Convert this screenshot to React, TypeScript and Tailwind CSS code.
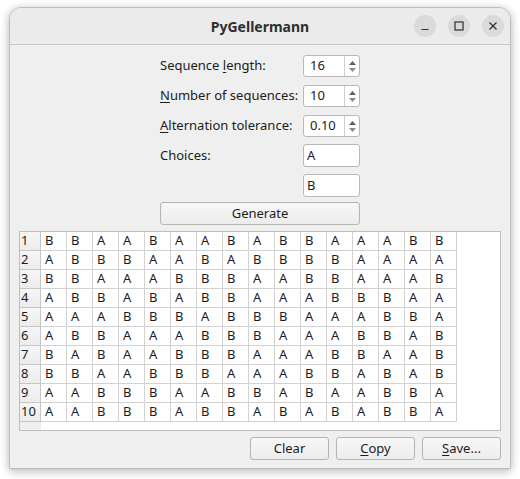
const rows: string[] = [
  "BBAABAABABBAAABB",
  "ABBBAABABBBBAAAA",
  "BBAAABBBAABBAAAB",
  "ABBABABBAAABBBAA",
  "AAABBBABBBAAABBA",
  "ABBAAABBBAAABBAB",
  "BABAABBBAAABBAAB",
  "BBAABBBAAABBABAB",
  "AABBBAABBABAABBA",
  "AABBBABBABABABBA",
];

const font = { fontFamily: '"Noto Sans", "DejaVu Sans", sans-serif' };

function SpinBox({ value }: { value: string }): JSX.Element {
  return (
    <div className="flex h-[22px] w-[57px] rounded-[3px] border border-[#b8b8b8] bg-white">
      <div className="flex flex-1 items-center pl-[6px] text-[13px] text-[#1c1c1c]">{value}</div>
      <div className="flex w-[15px] flex-col items-center justify-center gap-[3px] border-l border-[#d0d0d0]">
        <svg width="7" height="4" viewBox="0 0 7 4">
          <path d="M0 4 L3.5 0 L7 4 Z" fill="#5f5f5f" />
        </svg>
        <svg width="7" height="4" viewBox="0 0 7 4">
          <path d="M0 0 L3.5 4 L7 0 Z" fill="#8a8a8a" />
        </svg>
      </div>
    </div>
  );
}

function LineEdit({ value }: { value: string }): JSX.Element {
  return (
    <div className="flex h-[23px] w-[57px] items-center rounded-[3px] border border-[#b8b8b8] bg-white pl-[3px] text-[13px] text-[#1c1c1c]">
      {value}
    </div>
  );
}

function PushButton({ children, width }: { children: React.ReactNode; width: string }): JSX.Element {
  return (
    <div
      className={`flex h-[23px] items-center justify-center rounded-[3px] border border-[#b4b4b4] bg-gradient-to-b from-[#f7f7f7] to-[#ececec] text-[13px] text-[#1c1c1c] ${width}`}
    >
      {children}
    </div>
  );
}

export default function App(): JSX.Element {
  return (
    <div className="h-[479px] w-[520px] overflow-hidden bg-white pl-[9px] pt-[7px]" style={font}>
      <div className="flex h-[462px] w-[502px] flex-col overflow-hidden rounded-t-[12px] border border-[#bdbdbd] bg-[#efefef] shadow-[0_2px_10px_rgba(0,0,0,0.3)]">
        {/* title bar */}
        <div className="relative flex h-[37px] shrink-0 items-center justify-center border-b border-[#c8c8c8] bg-[#ebebeb]">
          <span className="text-[14px] font-bold text-[#2f2f2f]">PyGellermann</span>
          <div className="absolute right-[6px] top-[7px] flex gap-[12px]">
            <div className="flex h-[22px] w-[22px] items-center justify-center rounded-full bg-[#dadada]">
              <svg width="10" height="10" viewBox="0 0 10 10">
                <path d="M1.5 8.5 H8.5" stroke="#2e2e2e" strokeWidth="1.2" />
              </svg>
            </div>
            <div className="flex h-[22px] w-[22px] items-center justify-center rounded-full bg-[#dadada]">
              <svg width="10" height="10" viewBox="0 0 10 10">
                <rect x="1" y="1" width="8" height="8" fill="none" stroke="#2e2e2e" strokeWidth="1.2" />
              </svg>
            </div>
            <div className="flex h-[22px] w-[22px] items-center justify-center rounded-full bg-[#dadada]">
              <svg width="10" height="10" viewBox="0 0 10 10">
                <path d="M1.5 1.5 L8.5 8.5 M8.5 1.5 L1.5 8.5" stroke="#2e2e2e" strokeWidth="1.2" />
              </svg>
            </div>
          </div>
        </div>

        {/* form */}
        <div className="mx-auto mt-[10px] flex w-[200px] flex-col text-[13px] text-[#1c1c1c]">
          <div className="flex h-[22px] items-center justify-between">
            <span>
              Sequence <span className="underline underline-offset-2">l</span>ength:
            </span>
            <SpinBox value="16" />
          </div>
          <div className="mt-[8px] flex h-[22px] items-center justify-between">
            <span>
              <span className="underline underline-offset-2">N</span>umber of sequences:
            </span>
            <SpinBox value="10" />
          </div>
          <div className="mt-[8px] flex h-[22px] items-center justify-between">
            <span>
              <span className="underline underline-offset-2">A</span>lternation tolerance:
            </span>
            <SpinBox value="0.10" />
          </div>
          <div className="mt-[7px] flex h-[23px] items-center justify-between">
            <span>Choices:</span>
            <LineEdit value="A" />
          </div>
          <div className="mt-[7px] flex h-[23px] items-center justify-end">
            <LineEdit value="B" />
          </div>
          <div className="mt-[5px]">
            <PushButton width="w-[200px]">Generate</PushButton>
          </div>
        </div>

        {/* table */}
        <div className="mx-[9px] mt-[6px] flex h-[200px] flex-col border border-[#bdbdbd] bg-white text-[13px] text-[#1c1c1c]">
          <div className="grid grid-cols-[21px_repeat(16,26px)] auto-rows-[19px]">
            {rows.map((row, i) => (
              <div key={i} className="contents">
                <div className="flex items-center border-b border-r border-[#c6c6c6] bg-gradient-to-b from-[#f6f6f6] to-[#ececec] pl-[1px]">
                  {String(i + 1)}
                </div>
                {row.split("").map((c, j) => (
                  <div key={j} className="flex items-center border-b border-r border-[#d2d2d2] pl-[4px]">
                    {c}
                  </div>
                ))}
              </div>
            ))}
          </div>
          <div className="flex flex-1">
            <div className="w-[21px] bg-[#efefef]" />
          </div>
        </div>

        {/* buttons */}
        <div className="mr-[9px] mt-[6px] flex justify-end gap-[7px]">
          <PushButton width="w-[79px]">Clear</PushButton>
          <PushButton width="w-[79px]">
            <span>
              <span className="underline underline-offset-2">C</span>opy
            </span>
          </PushButton>
          <PushButton width="w-[79px]">
            <span>
              <span className="underline underline-offset-2">S</span>ave...
            </span>
          </PushButton>
        </div>
      </div>
    </div>
  );
}
